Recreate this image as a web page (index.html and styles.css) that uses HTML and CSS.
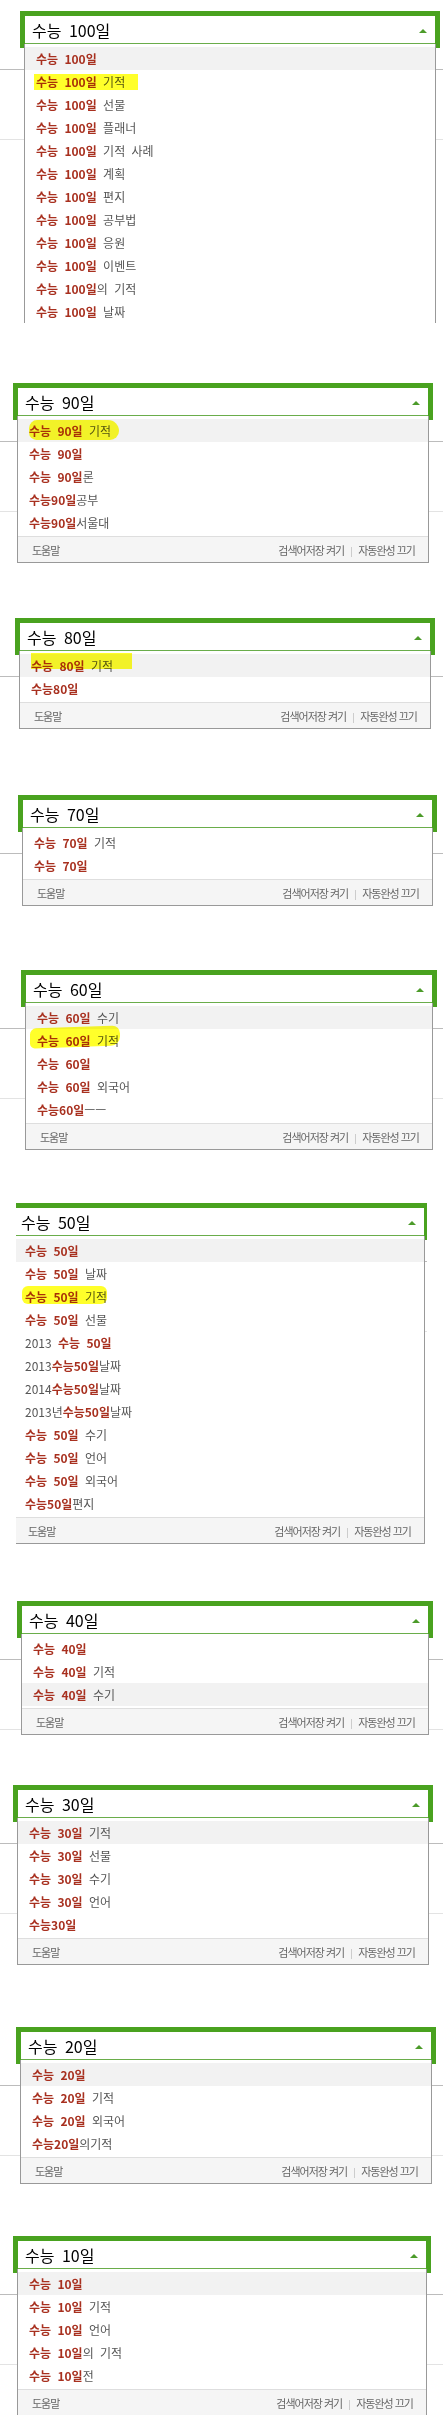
FILE: index.html
```html
<!DOCTYPE html>
<html lang="ko">
<head>
<meta charset="UTF-8">
<meta name="viewport" content="width=device-width, initial-scale=1.0">
<title>수능 D-day 자동완성</title>
<link rel="stylesheet" href="styles.css">
</head>
<body>

<!-- 100일 -->
<div class="shot lines s100">
<div class="ac">
<div class="search"><div class="field"><span class="query">수능 100일</span><span class="arrow"></span></div></div>
<div class="suggest">
<ul class="list">
<li class="on"><b>수능 100일</b></li>
<li><span class="mark m1"><b>수능 100일</b> 기적</span></li>
<li><b>수능 100일</b> 선물</li>
<li><b>수능 100일</b> 플래너</li>
<li><b>수능 100일</b> 기적 사례</li>
<li><b>수능 100일</b> 계획</li>
<li><b>수능 100일</b> 편지</li>
<li><b>수능 100일</b> 공부법</li>
<li><b>수능 100일</b> 응원</li>
<li><b>수능 100일</b> 이벤트</li>
<li><b>수능 100일</b>의 기적</li>
<li><b>수능 100일</b> 날짜</li>
</ul>
</div>
</div>
</div>

<!-- 90일 -->
<div class="shot lines s90">
<div class="ac">
<div class="search"><div class="field"><span class="query">수능 90일</span><span class="arrow"></span></div></div>
<div class="suggest">
<ul class="list">
<li class="on"><span class="mark m2"><b>수능 90일</b> 기적</span></li>
<li><b>수능 90일</b></li>
<li><b>수능 90일</b>론</li>
<li><b>수능90일</b>공부</li>
<li><b>수능90일</b>서울대</li>
</ul>
<div class="foot"><a>도움말</a><span class="opts"><a>검색어저장 켜기</a><i class="bar"></i><a>자동완성 끄기</a></span></div>
</div>
</div>
</div>

<!-- 80일 -->
<div class="shot lines s80">
<div class="ac">
<div class="search"><div class="field"><span class="query">수능 80일</span><span class="arrow"></span></div></div>
<div class="suggest">
<ul class="list">
<li class="on"><span class="mark m3"><b>수능 80일</b> 기적</span></li>
<li><b>수능80일</b></li>
</ul>
<div class="foot"><a>도움말</a><span class="opts"><a>검색어저장 켜기</a><i class="bar"></i><a>자동완성 끄기</a></span></div>
</div>
</div>
</div>

<!-- 70일 -->
<div class="shot lines s70">
<div class="ac">
<div class="search"><div class="field"><span class="query">수능 70일</span><span class="arrow"></span></div></div>
<div class="suggest">
<ul class="list">
<li><b>수능 70일</b> 기적</li>
<li><b>수능 70일</b></li>
</ul>
<div class="foot"><a>도움말</a><span class="opts"><a>검색어저장 켜기</a><i class="bar"></i><a>자동완성 끄기</a></span></div>
</div>
</div>
</div>

<!-- 60일 -->
<div class="shot lines s60">
<div class="ac">
<div class="search"><div class="field"><span class="query">수능 60일</span><span class="arrow"></span></div></div>
<div class="suggest">
<ul class="list">
<li class="on"><b>수능 60일</b> 수기</li>
<li><span class="mark m5"><b>수능 60일</b> 기적</span></li>
<li><b>수능 60일</b></li>
<li><b>수능 60일</b> 외국어</li>
<li><b>수능60일</b>ㅡㅡ</li>
</ul>
<div class="foot"><a>도움말</a><span class="opts"><a>검색어저장 켜기</a><i class="bar"></i><a>자동완성 끄기</a></span></div>
</div>
</div>
</div>

<!-- 50일 : 좌우가 잘린 캡처 -->
<div class="shot s50">
<div class="crop lines">
<div class="ac">
<div class="search"><div class="field"><span class="query">수능 50일</span><span class="arrow"></span></div></div>
<div class="suggest">
<ul class="list">
<li class="on"><b>수능 50일</b></li>
<li><b>수능 50일</b> 날짜</li>
<li><span class="mark m6"><b>수능 50일</b> 기적</span></li>
<li><b>수능 50일</b> 선물</li>
<li>2013 <b>수능 50일</b></li>
<li>2013<b>수능50일</b>날짜</li>
<li>2014<b>수능50일</b>날짜</li>
<li>2013년<b>수능50일</b>날짜</li>
<li><b>수능 50일</b> 수기</li>
<li><b>수능 50일</b> 언어</li>
<li><b>수능 50일</b> 외국어</li>
<li><b>수능50일</b>편지</li>
</ul>
<div class="foot"><a>도움말</a><span class="opts"><a>검색어저장 켜기</a><i class="bar"></i><a>자동완성 끄기</a></span></div>
</div>
</div>
</div>
</div>

<!-- 40일 -->
<div class="shot lines s40">
<div class="ac">
<div class="search"><div class="field"><span class="query">수능 40일</span><span class="arrow"></span></div></div>
<div class="suggest">
<ul class="list">
<li><b>수능 40일</b></li>
<li><b>수능 40일</b> 기적</li>
<li class="on"><b>수능 40일</b> 수기</li>
</ul>
<div class="foot"><a>도움말</a><span class="opts"><a>검색어저장 켜기</a><i class="bar"></i><a>자동완성 끄기</a></span></div>
</div>
</div>
</div>

<!-- 30일 -->
<div class="shot lines s30">
<div class="ac">
<div class="search"><div class="field"><span class="query">수능 30일</span><span class="arrow"></span></div></div>
<div class="suggest">
<ul class="list">
<li class="on"><b>수능 30일</b> 기적</li>
<li><b>수능 30일</b> 선물</li>
<li><b>수능 30일</b> 수기</li>
<li><b>수능 30일</b> 언어</li>
<li><b>수능30일</b></li>
</ul>
<div class="foot"><a>도움말</a><span class="opts"><a>검색어저장 켜기</a><i class="bar"></i><a>자동완성 끄기</a></span></div>
</div>
</div>
</div>

<!-- 20일 -->
<div class="shot lines s20">
<div class="ac">
<div class="search"><div class="field"><span class="query">수능 20일</span><span class="arrow"></span></div></div>
<div class="suggest">
<ul class="list">
<li class="on"><b>수능 20일</b></li>
<li><b>수능 20일</b> 기적</li>
<li><b>수능 20일</b> 외국어</li>
<li><b>수능20일</b>의기적</li>
</ul>
<div class="foot"><a>도움말</a><span class="opts"><a>검색어저장 켜기</a><i class="bar"></i><a>자동완성 끄기</a></span></div>
</div>
</div>
</div>

<!-- 10일 -->
<div class="shot lines s10">
<div class="ac">
<div class="search"><div class="field"><span class="query">수능 10일</span><span class="arrow"></span></div></div>
<div class="suggest">
<ul class="list">
<li class="on"><b>수능 10일</b></li>
<li><b>수능 10일</b> 기적</li>
<li><b>수능 10일</b> 언어</li>
<li><b>수능 10일</b>의 기적</li>
<li><b>수능 10일</b>전</li>
</ul>
<div class="foot"><a>도움말</a><span class="opts"><a>검색어저장 켜기</a><i class="bar"></i><a>자동완성 끄기</a></span></div>
</div>
</div>
</div>

</body>
</html>
```

FILE: styles.css
```css
html {
overflow: hidden;
}
body {
margin: 0;
padding-top: 11px;
background: #fff;
font-family: "Noto Sans CJK KR", "Noto Sans", sans-serif;
color: #555;
}

/* page behind the layer: two rule lines */
.lines {
background:
linear-gradient(#bcbcbc, #bcbcbc) 0 58px / 100% 1px no-repeat,
linear-gradient(#e3e3e3, #e3e3e3) 0 128px / 100% 1px no-repeat;
}

/* one capture per block */
.s100 { height: 312px; overflow: hidden; }
.s90 { margin-top: 60px; }
.s80 { margin-top: 55px; }
.s70 { margin-top: 66px; }
.s60 { margin-top: 64px; }
.s50 { margin-top: 53px; }
.s40 { margin-top: 57px; }
.s30 { margin-top: 50px; }
.s20 { margin-top: 62px; }
.s10 { margin-top: 52px; }

.ac {
width: 420px;
margin-left: 20px;
}
.s90 .ac { margin-left: 13px; }
.s80 .ac { margin-left: 15px; }
.s70 .ac { margin-left: 18px; width: 419px; }
.s60 .ac { margin-left: 21px; width: 416px; }
.s40 .ac { margin-left: 17px; width: 416px; }
.s30 .ac { margin-left: 13px; }
.s20 .ac { margin-left: 16px; }
.s10 .ac { margin-left: 13px; width: 418px; }

.crop {
margin-left: 16px;
width: 411px;
overflow: hidden;
}
.s50 .ac { margin-left: -7px; }

/* search box */
.search {
border: 5px solid #49a21f;
border-bottom-width: 4px;
background: #fff;
}
.field {
height: 25px;
padding: 2px 8px 0 7px;
border-bottom: 1px solid #6aad4a;
display: flex;
align-items: center;
justify-content: space-between;
}
.query {
font-size: 16px;
line-height: 25px;
color: #000;
word-spacing: 3px;
}
.arrow {
width: 0;
height: 0;
border-left: 4px solid transparent;
border-right: 4px solid transparent;
border-bottom: 4px solid #4c9b2a;
}

/* suggestion layer */
.suggest {
margin: -4px 4px 0;
background: #fff;
border: 1px solid #999;
border-top: 0;
}
.list {
list-style: none;
margin: 0;
padding: 3px 0 2px;
}
.list li {
height: 23px;
line-height: 23px;
padding-left: 11px;
font-size: 12px;
color: #555;
word-spacing: 3px;
white-space: nowrap;
}
.list b {
color: #a8301f;
}
.list li.on {
background: #f2f2f2;
}

.foot {
height: 25px;
padding: 0 13px 0 14px;
border-top: 1px solid #dedede;
background: #f5f5f5;
display: flex;
align-items: center;
justify-content: space-between;
font-size: 11px;
letter-spacing: -1px;
color: #666;
}
.bar {
display: inline-block;
width: 1px;
height: 10px;
margin: 0 6px 0 7px;
background: #ccc;
vertical-align: middle;
}

/* highlighter strokes */
.mark {
display: inline-block;
position: relative;
}
.mark::after {
content: "";
position: absolute;
background: #ffff2a;
mix-blend-mode: multiply;
}
.m1::after { left: -2px; right: -13px; top: 4px; height: 16px; }
.m2::after { left: 0; right: -8px; top: 1px; height: 20px; border-radius: 9px 12px 10px 8px; }
.m3::after { left: 0; right: -19px; top: -1px; height: 16px; }
.m5::after { left: -7px; right: -1px; top: -2px; height: 20px; border-radius: 6px 8px 9px 5px; transform: skewY(-2deg); }
.m6::after { left: -3px; right: 0; top: 1px; height: 18px; border-radius: 6px; }
```
